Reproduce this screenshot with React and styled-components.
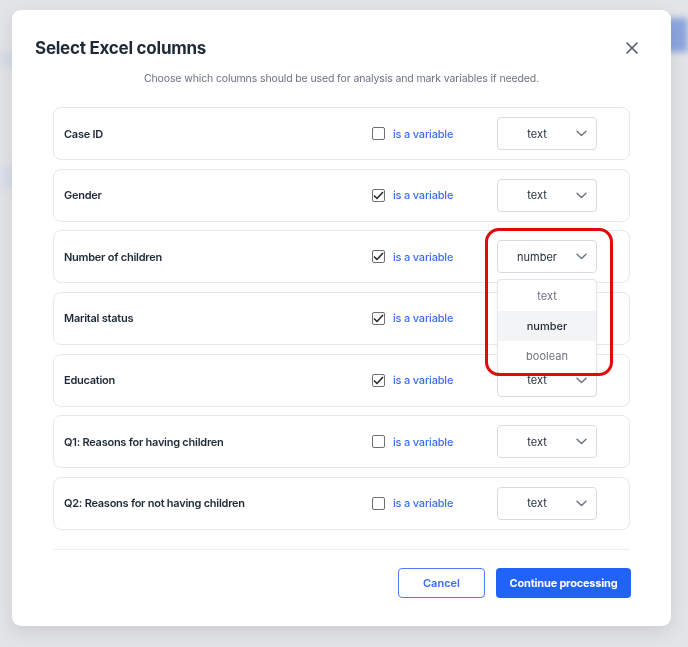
import React from "react";
import styled, { createGlobalStyle } from "styled-components";

const GlobalStyle = createGlobalStyle`
  html, body {
    margin: 0;
    padding: 0;
    width: 688px;
    height: 647px;
    overflow: hidden;
    background: #e3e4e7;
    font-family: Inter, "Noto Sans", "Liberation Sans", sans-serif;
  }
`;

const columns = [
    { id: 1, name: "Case ID", variable: false, type: "text" },
    { id: 2, name: "Gender", variable: true, type: "text" },
    { id: 3, name: "Number of children", variable: true, type: "number", open: true },
    { id: 4, name: "Marital status", variable: true, type: "text", covered: true },
    { id: 5, name: "Education", variable: true, type: "text" },
    { id: 6, name: "Q1: Reasons for having children", variable: false, type: "text" },
    { id: 7, name: "Q2: Reasons for not having children", variable: false, type: "text" },
];

const types = ["text", "number", "boolean"];

function Chevron() {
    return (
        <svg width="11" height="7" viewBox="0 0 11 7" fill="none">
            <path d="M1 1.2L5.5 5.5L10 1.2" stroke="#6b7280" strokeWidth="1.4" strokeLinecap="round" strokeLinejoin="round" />
        </svg>
    );
}

function CloseIcon() {
    return (
        <svg width="12" height="12" viewBox="0 0 12 12" fill="none">
            <path d="M1 1L11 11M11 1L1 11" stroke="#4b5563" strokeWidth="1.5" strokeLinecap="round" />
        </svg>
    );
}

export default function App() {
    return (
        <>
            <GlobalStyle />
            <Page>
                <BgBar />
                <BgStrip />
                <BgBlock />
            </Page>
            <Overlay>
                <Modal>
                    <Header>
                        <Title>Select Excel columns</Title>
                        <CloseButton aria-label="close"><CloseIcon /></CloseButton>
                    </Header>
                    <Subtitle>Choose which columns should be used for analysis and mark variables if needed.</Subtitle>
                    <List>
                        {columns.map((col) => (
                            <Row key={col.id}>
                                <Label>{col.name}</Label>
                                <VarToggle>
                                    <Box $checked={col.variable}>
                                        {col.variable && (
                                            <svg width="11" height="9" viewBox="0 0 11 9" fill="none">
                                                <path d="M1 4.5L4 7.5L10 1" stroke="#222" strokeWidth="1.5" />
                                            </svg>
                                        )}
                                    </Box>
                                    <VarText>is a variable</VarText>
                                </VarToggle>
                                <SelectWrap>
                                    <Select $covered={col.covered}>
                                        <SelectValue>{col.type}</SelectValue>
                                        <Chevron />
                                    </Select>
                                    {col.open && (
                                        <>
                                            <Menu>
                                                {types.map((t) => (
                                                    <MenuItem key={t} $active={t === col.type}>{t}</MenuItem>
                                                ))}
                                            </Menu>
                                            <Highlight />
                                        </>
                                    )}
                                </SelectWrap>
                            </Row>
                        ))}
                    </List>
                    <Divider />
                    <Footer>
                        <CancelButton>Cancel</CancelButton>
                        <PrimaryButton>Continue processing</PrimaryButton>
                    </Footer>
                </Modal>
            </Overlay>
        </>
    );
}

const Page = styled.div`
    height: 647px;
    display: flex;
    flex-direction: column;
    filter: blur(3px);
`;

const BgBar = styled.div`
    margin: 18px 0 0 auto;
    width: 90px;
    height: 34px;
    background: #8ea6df;
`;

const BgStrip = styled.div`
    height: 14px;
    width: 60px;
    background: #d5dbe8;
`;

const BgBlock = styled.div`
    margin-top: 100px;
    width: 16px;
    height: 24px;
    background: #d9deea;
`;

const Overlay = styled.div`
    position: fixed;
    inset: 0;
    padding: 10px 0 0 12px;
`;

const Modal = styled.div`
    width: 659px;
    height: 616px;
    box-sizing: border-box;
    background: #fff;
    border-radius: 9px;
    box-shadow: 0 6px 18px rgba(0, 0, 0, 0.1);
    display: flex;
    flex-direction: column;
`;

const Header = styled.div`
    display: flex;
    align-items: center;
    justify-content: space-between;
    padding: 26px 32px 0 23px;
`;

const Title = styled.h2`
    margin: 0;
    font-size: 17px;
    line-height: 24px;
    font-weight: 700;
    color: #1f2937;
    letter-spacing: -0.25px;
`;

const CloseButton = styled.button`
    border: none;
    background: none;
    padding: 0;
    width: 14px;
    height: 14px;
    display: flex;
    align-items: center;
    justify-content: center;
`;

const Subtitle = styled.p`
    margin: 11px 0 0;
    text-align: center;
    font-size: 10.5px;
    letter-spacing: -0.12px;
    line-height: 16px;
    color: #6b7280;
`;

const List = styled.div`
    margin: 20px 41px 0;
    display: flex;
    flex-direction: column;
    gap: 8.67px;
`;

const Row = styled.div`
    height: 53px;
    box-sizing: border-box;
    border: 1px solid #e6e8ec;
    border-radius: 8px;
    display: grid;
    grid-template-columns: 1fr 126px 100px;
    align-items: center;
    padding: 0 32px 0 10px;
`;

const Label = styled.span`
    font-size: 11px;
    font-weight: 600;
    letter-spacing: -0.25px;
    color: #1f2937;
`;

const VarToggle = styled.label`
    display: flex;
    align-items: center;
    gap: 8px;
    padding-left: 1px;
`;

const Box = styled.span`
    width: 13px;
    height: 13px;
    box-sizing: border-box;
    border: 1px solid #6f6f6f;
    border-radius: 2px;
    background: #fff;
    display: flex;
    align-items: center;
    justify-content: center;
`;

const VarText = styled.span`
    font-size: 11px;
    font-weight: 500;
    letter-spacing: -0.2px;
    color: #3a6ff5;
`;

const SelectWrap = styled.div`
    position: relative;
`;

const Select = styled.div`
    height: 33px;
    box-sizing: border-box;
    border: 1px solid #d8dbe1;
    border-radius: 4px;
    display: flex;
    align-items: center;
    padding: 0 9px 0 0;
    visibility: ${(p) => (p.$covered ? "hidden" : "visible")};
`;

const SelectValue = styled.span`
    flex: 1;
    text-align: center;
    font-size: 11px;
    color: #1f2937;
`;

const Menu = styled.div`
    position: absolute;
    top: 39px;
    left: 0;
    width: 100px;
    height: 95px;
    box-sizing: border-box;
    background: #fff;
    border: 1px solid #e3e5e9;
    border-radius: 4px;
    box-shadow: 0 2px 6px rgba(0, 0, 0, 0.04);
    z-index: 2;
`;

const MenuItem = styled.div`
    height: 30px;
    display: flex;
    align-items: center;
    justify-content: center;
    font-size: 11px;
    font-weight: ${(p) => (p.$active ? 500 : 400)};
    color: ${(p) => (p.$active ? "#1f2937" : "#6b7280")};
    background: ${(p) => (p.$active ? "#f3f4f6" : "transparent")};
    &:first-child { height: 31px; }
`;

const Highlight = styled.div`
    position: absolute;
    left: -12px;
    top: -12px;
    width: 128px;
    height: 148px;
    box-sizing: border-box;
    border: 3px solid #e0090b;
    border-radius: 14px;
    z-index: 3;
    pointer-events: none;
`;

const Divider = styled.div`
    margin: 19px 41px 0;
    height: 1px;
    background: #eceef1;
`;

const Footer = styled.div`
    display: flex;
    justify-content: flex-end;
    gap: 11px;
    padding: 18px 40px 0;
`;

const CancelButton = styled.button`
    width: 87px;
    height: 30px;
    border: 1px solid #4c7cf6;
    border-radius: 4px;
    background: #fff;
    color: #3a6ff5;
    font-family: inherit;
    font-size: 11px;
    font-weight: 600;
`;

const PrimaryButton = styled.button`
    width: 135px;
    height: 30px;
    border: none;
    border-radius: 4px;
    background: #2163f6;
    color: #fff;
    font-family: inherit;
    font-size: 11px;
    font-weight: 700;
    letter-spacing: -0.2px;
`;
